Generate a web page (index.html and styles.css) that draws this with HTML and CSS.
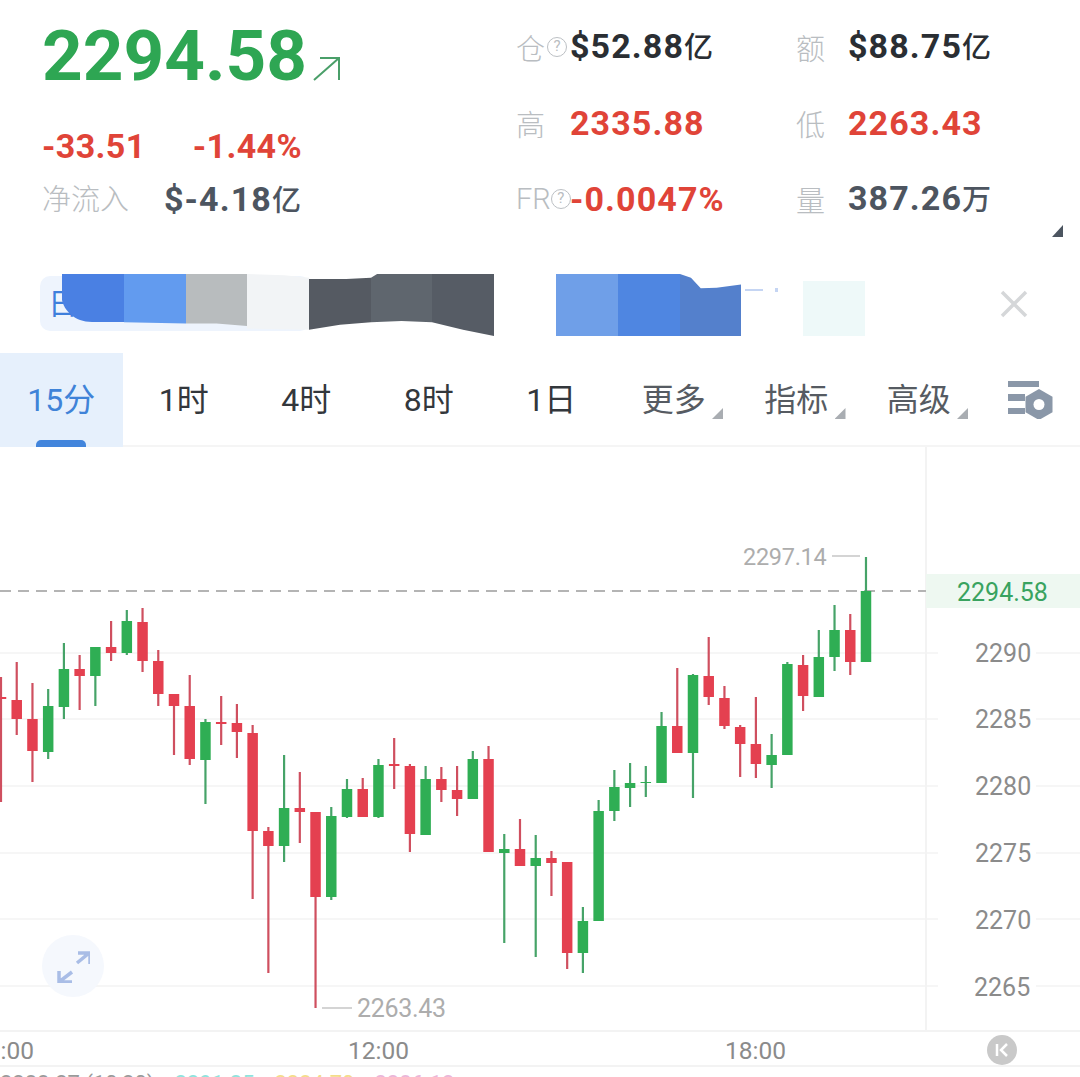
FILE: index.html
```html
<!DOCTYPE html>
<html lang="zh-CN">
<head>
  <meta charset="UTF-8">
  <meta name="viewport" content="width=device-width, initial-scale=1">
  <title>ETH 15分</title>
  <link rel="stylesheet" href="styles.css">
</head>
<body>
  <div class="page">
    <header class="ticker">
      <div class="summary">
        <div class="price-row">
          <span class="price">2294.58</span>
          <svg class="price-arrow" viewBox="0 0 28 25"><path d="M1 24 26 2M7 2h19v22"/></svg>
        </div>
        <div class="change-row">
          <span class="change">-33.51</span>
          <span class="change">-1.44%</span>
        </div>
        <div class="inflow-row">
          <span class="label">净流入</span>
          <span class="value dark">$-4.18<small>亿</small></span>
        </div>
      </div>
      <div class="stats">
        <div class="stat"><span class="label">仓<i class="help">?</i></span><span class="value black">$52.88<small>亿</small></span></div>
        <div class="stat"><span class="label">额</span><span class="value black">$88.75<small>亿</small></span></div>
        <div class="stat"><span class="label">高</span><span class="value red">2335.88</span></div>
        <div class="stat"><span class="label">低</span><span class="value red">2263.43</span></div>
        <div class="stat"><span class="label latin">FR<i class="help">?</i></span><span class="value red">-0.0047%</span></div>
        <div class="stat"><span class="label">量</span><span class="value dark">387.26<small>万</small></span></div>
      </div>
      <span class="corner"></span>
    </header>

    <div class="notice">
      <div class="notice-pill">日</div>
      <svg class="notice-close" viewBox="0 0 28 28"><path d="M2 2 26 26M26 2 2 26"/></svg>
      <div class="censor">
        <span class="c1"></span><span class="c2"></span><span class="c3"></span><span class="c4"></span>
        <span class="c5"></span><span class="c6"></span><span class="c7"></span><span></span>
        <span class="c8"></span><span class="c9"></span><span class="c10"></span><span class="c11"></span>
        <span class="c12"></span>
      </div>
    </div>

    <nav class="tabs">
      <div class="tab active">15分</div>
      <div class="tab">1时</div>
      <div class="tab">4时</div>
      <div class="tab">8时</div>
      <div class="tab">1日</div>
      <div class="tab menu">更多</div>
      <div class="tab menu">指标</div>
      <div class="tab menu">高级</div>
      <div class="tab-icon">
        <svg viewBox="0 0 46 38" width="46" height="38">
          <path class="gear" d="M0 0h31v6H0zM0 13h17v7H0zM0 27h17v6H0z"/>
          <path class="gear" d="M31 8l13.500 7.800v15.400L31 39l-13.500-7.800V15.800z"/>
          <circle cx="31" cy="23.500" r="5.500" fill="#fff"/>
        </svg>
      </div>
    </nav>

    <section class="chart">
      <svg class="plot" viewBox="0 447 1080 583" width="1080" height="583">
        <path class="grid" d="M0 653H938M1036 653H1080M0 719H938M1036 719H1080M0 786H938M1036 786H1080M0 853H938M1036 853H1080M0 919H938M1036 919H1080M0 986H938M1036 986H1080"/>
        <path class="axis-line" d="M926 447V1030"/>
        <rect class="last-bg" x="926" y="574" width="154" height="34"/>
        <path class="last-line" d="M0 591H926"/>
        <g id="candles"></g>
        <path class="mark-line" d="M832 556H860M322 1008H352"/>
        <text class="mark" x="743" y="565">2297.14</text>
        <text class="mark low" x="357" y="1017">2263.43</text>
        <text class="last-text" x="957" y="601">2294.58</text>
        <text class="tick" x="975" y="662">2290</text>
        <text class="tick" x="975" y="728">2285</text>
        <text class="tick" x="975" y="795">2280</text>
        <text class="tick" x="975" y="862">2275</text>
        <text class="tick" x="975" y="929">2270</text>
        <text class="tick" x="974" y="996">2265</text>
      </svg>
      <div class="expand">
        <svg viewBox="0 0 34 34" width="34" height="34"><path d="M21 14 33 4M22 4h12v11M16 23 3 33M3 22v11h13"/></svg>
      </div>
    </section>

    <div class="time-axis">
      <span class="time first">06:00</span>
      <span class="time noon">12:00</span>
      <span class="time evening">18:00</span>
      <span class="back">
        <svg viewBox="0 0 14 14" width="14" height="14"><path d="M2 1v12M12 1 6 7l6 6"/></svg>
      </span>
    </div>

    <div class="legend">
      <span class="grey">2288.27 (10,20)</span>
      <span class="cyan">2291.35</span>
      <span class="yellow">2284.70</span>
      <span class="pink">2286.12</span>
    </div>
  </div>

  <script src="chart.js"></script>
</body>
</html>
```

FILE: styles.css
```css
* {
  box-sizing: border-box;
}

body {
  margin: 0;
  background-color: #ffffff;
  font-family: Roboto, "Noto Sans CJK SC", sans-serif;
  color: #333;
}

.page {
  width: 1080px;
  height: 1077px;
  overflow: hidden;
}

/* top block */
.ticker {
  position: relative;
  height: 274px;
  padding-left: 42px;
  display: flex;
}

.summary {
  width: 474px;
}

.price-row {
  display: flex;
  align-items: flex-end;
  height: 98px;
  padding-top: 14px;
}

.price {
  font-size: 71px;
  line-height: 84px;
  font-weight: 700;
  color: #2ea653;
}

.price-arrow {
  width: 28px;
  height: 25px;
  margin: 0 0 17px 6px;
  fill: none;
  stroke: #4a9f69;
  stroke-width: 2;
}

.change-row {
  display: flex;
  gap: 47px;
  margin-top: 28px;
  font-size: 34px;
  line-height: 40px;
  font-weight: 700;
  color: #e04438;
  letter-spacing: 0.4px;
}

.inflow-row {
  display: flex;
  gap: 35px;
  margin-top: 13px;
  line-height: 40px;
}

.label {
  display: inline-flex;
  align-items: center;
  font-size: 29px;
  font-weight: 300;
  color: #b9bdc1;
  white-space: nowrap;
}

.label.latin {
  font-family: Roboto, sans-serif;
}

.help {
  width: 20px;
  height: 20px;
  margin-left: 2px;
  border: 1.5px solid #bcc0c4;
  border-radius: 50%;
  font-size: 15px;
  line-height: 17px;
  font-style: normal;
  font-weight: 400;
  text-align: center;
  flex: none;
}

.latin .help {
  margin-left: 0;
}

.value {
  font-size: 34px;
  line-height: 40px;
  font-weight: 700;
  letter-spacing: 1.1px;
  white-space: nowrap;
}

.value small {
  font-size: 29px;
  font-weight: 500;
  letter-spacing: 0;
}

.black {
  color: #2a2e33;
}

.dark {
  color: #4d5560;
}

.red {
  color: #e04438;
}

.stats {
  display: grid;
  grid-template-columns: 280px 240px;
  grid-auto-rows: 76px;
  padding-top: 9px;
  align-items: center;
}

.stat {
  display: grid;
  grid-template-columns: 54px auto;
  justify-content: start;
  align-items: center;
}

.stat:nth-child(even) {
  grid-template-columns: 52px auto;
}

.corner {
  position: absolute;
  right: 17px;
  top: 225px;
  width: 11px;
  height: 12px;
  background-color: #4c5560;
  clip-path: polygon(100% 0, 100% 100%, 0 100%);
}

/* notice row, partly painted over */
.notice {
  position: relative;
  height: 62px;
  padding: 2px 0 0 40px;
}

.notice-pill {
  width: 270px;
  height: 55px;
  padding-left: 8px;
  background-color: #eef4fd;
  border-radius: 10px;
  font-size: 30px;
  line-height: 55px;
  color: #3f7fdc;
}

.notice-close {
  position: absolute;
  right: 52px;
  top: 16px;
  width: 28px;
  height: 28px;
  fill: none;
  stroke: #d5d7d9;
  stroke-width: 3.500;
}

.censor {
  position: absolute;
  left: 62px;
  top: 0;
  height: 62px;
  display: grid;
  grid-template-columns: 62px 62px 61px 62px 62px 61px 62px 62px 62px 62px 61px 62px 62px;
}

.censor span {
  display: block;
  height: 62px;
}

.c1 {
  background-color: #4a80e3;
  clip-path: path("M0 0H62V48H30C12 48 2 36 0 26Z");
}
.c2 {
  background-color: #629bef;
  clip-path: polygon(0 0, 100% 0, 100% 80%, 0 78%);
}
.c3 {
  background-color: #b8bcbe;
  clip-path: polygon(0 0, 100% 0, 100% 84%, 50% 80%, 0 80%);
}
.c4 {
  background-color: #f2f4f6;
  clip-path: polygon(0 0, 60% 2%, 100% 6%, 100% 90%, 0 88%);
}
.c5 {
  background-color: #555a62;
  clip-path: polygon(0 8%, 60% 8%, 100% 6%, 100% 78%, 50% 82%, 0 90%);
}
.c6 {
  background-color: #5f666e;
  clip-path: polygon(0 6%, 10% 0, 100% 0, 100% 78%, 50% 76%, 0 78%);
}
.c7 {
  background-color: #565c65;
  clip-path: polygon(0 0, 100% 0, 100% 100%, 50% 90%, 0 78%);
}
.c8 {
  background-color: #6f9fe8;
}
.c9 {
  background-color: #4f86e1;
}
.c10 {
  background-color: #5480cc;
  clip-path: polygon(0 0, 18% 6%, 34% 23%, 60% 22%, 100% 17%, 100% 100%, 0 100%);
}
.c11 {
  background:
    linear-gradient(#c5d5f3, #c5d5f3) 4px 15px / 18px 2px no-repeat,
    linear-gradient(#c5d5f3, #c5d5f3) 34px 14px / 3px 4px no-repeat;
}
.c12 {
  background-color: #eef9f9;
  clip-path: inset(7px 0 0 0);
}

/* interval tabs */
.tabs {
  height: 94px;
  margin-top: 17px;
  display: grid;
  grid-template-columns: repeat(8, 122.500px) 100px;
  border-bottom: 2px solid #f5f5f5;
}

.tab {
  position: relative;
  display: flex;
  align-items: center;
  justify-content: center;
  height: 94px;
  padding-bottom: 6px;
  font-size: 32px;
  color: #33373c;
}

.tab.active {
  background-color: #e6f0fc;
  color: #3f83d8;
}

.tab.active::after {
  content: "";
  position: absolute;
  left: 36px;
  bottom: 0;
  width: 50px;
  height: 7px;
  background-color: #4285dc;
  border-radius: 5px 5px 0 0;
}

.tab.menu {
  color: #565b62;
}

.tab.menu::after {
  content: "";
  position: absolute;
  right: 12px;
  top: 55px;
  width: 11px;
  height: 11px;
  background-color: #a9adb2;
  clip-path: polygon(100% 0, 100% 100%, 0 100%);
}

.tab-icon {
  padding: 28px 0 0 28px;
  height: 92px;
}

.gear {
  fill: #8a97a8;
}

/* chart */
.chart {
  position: relative;
  height: 583px;
  margin-top: 0;
}

.plot {
  display: block;
}

.grid {
  stroke: #f6f6f6;
  stroke-width: 2;
  fill: none;
}

.axis-line {
  stroke: #f3f3f3;
  stroke-width: 2;
}

.last-bg {
  fill: #eef8f1;
}

.last-line {
  stroke: #b4b4b4;
  stroke-width: 2;
  stroke-dasharray: 11 7;
}

.mark-line {
  stroke: #c6c6c6;
  stroke-width: 1.500;
  fill: none;
}

.mark {
  font-size: 23.500px;
  letter-spacing: -0.300px;
  fill: #adadad;
}

.mark.low {
  font-size: 25px;
}

.last-text {
  font-size: 25px;
  fill: #39a35f;
}

.tick {
  font-size: 25px;
  fill: #8b8b8b;
}

.wick {
  stroke-width: 2.200;
}

.up {
  fill: #2fae54;
  stroke: #46a368;
}

.down {
  fill: #e44050;
  stroke: #cf4f5f;
}

.body {
  stroke: none;
}

.expand {
  position: absolute;
  left: 42px;
  top: 488px;
  width: 62px;
  height: 62px;
  padding: 14px;
  background-color: #f5f8fd;
  border-radius: 50%;
}

.expand svg {
  display: block;
  fill: none;
  stroke: #a9bde6;
  stroke-width: 3.500;
}

.time-axis {
  position: relative;
  height: 37px;
  border-top: 2px solid #f3f3f3;
  border-bottom: 2px solid #f3f3f3;
}

.time {
  position: absolute;
  top: 2px;
  font-size: 24.500px;
  line-height: 33px;
  color: #8b8b8b;
}

.first {
  left: -27px;
}

.noon {
  left: 348px;
}

.evening {
  left: 725px;
}

.back {
  position: absolute;
  left: 987px;
  top: 3px;
  width: 30px;
  height: 30px;
  padding: 8px;
  background-color: #c9c9c9;
  border-radius: 50%;
}

.back svg {
  display: block;
  fill: none;
  stroke: #ffffff;
  stroke-width: 2.500;
}

.legend {
  display: flex;
  gap: 20px;
  padding-top: 4px;
  font-size: 22px;
  line-height: 26px;
  white-space: nowrap;
}

.legend .grey {
  color: #9a9a9a;
}

.legend .cyan {
  color: #8fe3dc;
}

.legend .yellow {
  color: #f4dc8a;
}

.legend .pink {
  color: #eab6d8;
}
```

FILE: chart.js
```js
// wick top, wick bottom, body top, body bottom, colour (u = green, d = red)
const candles = [
  [677, 802, 697, 699, 'd'], [662, 735, 700, 719, 'd'], [683, 782, 719, 751, 'd'],
  [689, 759, 706, 752, 'u'], [643, 719, 669, 707, 'u'], [655, 710, 669, 676, 'd'],
  [647, 706, 647, 676, 'u'], [621, 661, 647, 653, 'd'], [610, 655, 621, 653, 'u'],
  [608, 672, 622, 661, 'd'], [650, 706, 661, 694, 'd'], [694, 755, 694, 706, 'd'],
  [675, 765, 706, 759, 'd'], [719, 804, 722, 760, 'u'], [696, 745, 722, 724, 'd'],
  [704, 758, 723, 732, 'd'], [725, 899, 733, 831, 'd'], [827, 973, 831, 846, 'd'],
  [755, 862, 808, 846, 'u'], [772, 843, 808, 812, 'd'], [812, 1008, 812, 897, 'd'],
  [807, 900, 816, 897, 'u'], [779, 818, 789, 817, 'u'], [778, 817, 789, 817, 'd'],
  [759, 818, 765, 817, 'u'], [738, 789, 764, 766, 'd'], [764, 852, 766, 834, 'd'],
  [766, 835, 779, 835, 'u'], [767, 802, 779, 790, 'd'], [766, 816, 790, 799, 'd'],
  [751, 799, 759, 799, 'u'], [746, 852, 759, 852, 'd'], [834, 943, 849, 853, 'u'],
  [819, 866, 849, 866, 'd'], [835, 957, 858, 866, 'u'], [851, 896, 858, 863, 'd'],
  [862, 969, 862, 953, 'd'], [907, 973, 921, 953, 'u'], [800, 921, 811, 921, 'u'],
  [770, 821, 787, 811, 'u'], [763, 807, 783, 788, 'u'], [766, 797, 782, 783, 'u'],
  [712, 783, 726, 783, 'u'], [668, 753, 726, 753, 'd'], [674, 798, 675, 753, 'u'],
  [637, 705, 676, 697, 'd'], [686, 729, 698, 726, 'd'], [725, 777, 727, 744, 'd'],
  [697, 778, 744, 764, 'd'], [734, 788, 755, 765, 'u'], [662, 755, 664, 755, 'u'],
  [655, 711, 665, 696, 'd'], [630, 697, 657, 697, 'u'], [605, 671, 630, 657, 'u'],
  [614, 675, 630, 662, 'd'], [557, 662, 591, 662, 'u']
];

const SVG_NS = 'http://www.w3.org/2000/svg';
const group = document.getElementById('candles');

function add(name, attrs) {
  const el = document.createElementNS(SVG_NS, name);
  for (const key in attrs) el.setAttribute(key, attrs[key]);
  group.appendChild(el);
}

candles.forEach((c, i) => {
  const x = 1 + i * 15.727;
  const cls = c[4] === 'u' ? 'up' : 'down';
  add('line', { x1: x, x2: x, y1: c[0], y2: c[1], class: 'wick ' + cls });
  add('rect', { x: x - 5.25, y: c[2], width: 10.5, height: c[3] - c[2], class: 'body ' + cls });
});
```
